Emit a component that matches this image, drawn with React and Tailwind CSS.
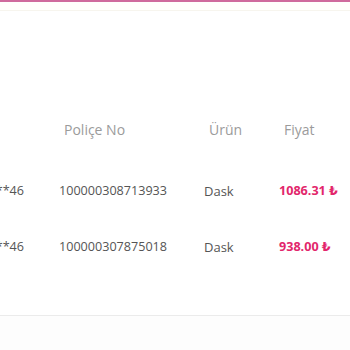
const rows = [
  { plate: '*******46', policy: '100000308713933', product: 'Dask', price: '1086.31 ₺' },
  { plate: '*******46', policy: '100000307875018', product: 'Dask', price: '938.00 ₺' },
];

export default function App() {
  return (
    <div className="w-[350px] h-[350px] overflow-hidden bg-white" style={{ fontFamily: '"Open Sans", "DejaVu Sans", sans-serif' }}>
      {/* top strip */}
      <div className="h-[11px] border-t-2 border-[#cf6a9c] border-b border-b-[#f7f5ee] bg-[#fffefb]" />

      <div className="h-[305px] border-b border-[#ebebeb]">
        {/* header */}
        <div className="grid grid-cols-[59px_145px_75px_71px] pt-[109px] text-[14px] leading-[20px] text-[#9b9b9b]">
          <div />
          <div className="pl-[5px]">Poliçe No</div>
          <div className="pl-[5px]">Ürün</div>
          <div className="pl-[5px]">Fiyat</div>
        </div>

        {/* rows */}
        <div className="mt-[41px] flex flex-col gap-[36px]">
          {rows.map((r) => (
            <div key={r.policy} className="grid grid-cols-[59px_145px_75px_71px] text-[12.6px] leading-[20px] text-[#555]">
              <div className="flex justify-end overflow-hidden pr-[35px] whitespace-nowrap">{r.plate}</div>
              <div>{r.policy}</div>
              <div className="text-[13px]">{r.product}</div>
              <div className="font-bold text-[#e2266b] whitespace-nowrap">{r.price}</div>
            </div>
          ))}
        </div>
      </div>
      <div className="h-[34px] bg-[#fdfdfd]" />
    </div>
  );
}
